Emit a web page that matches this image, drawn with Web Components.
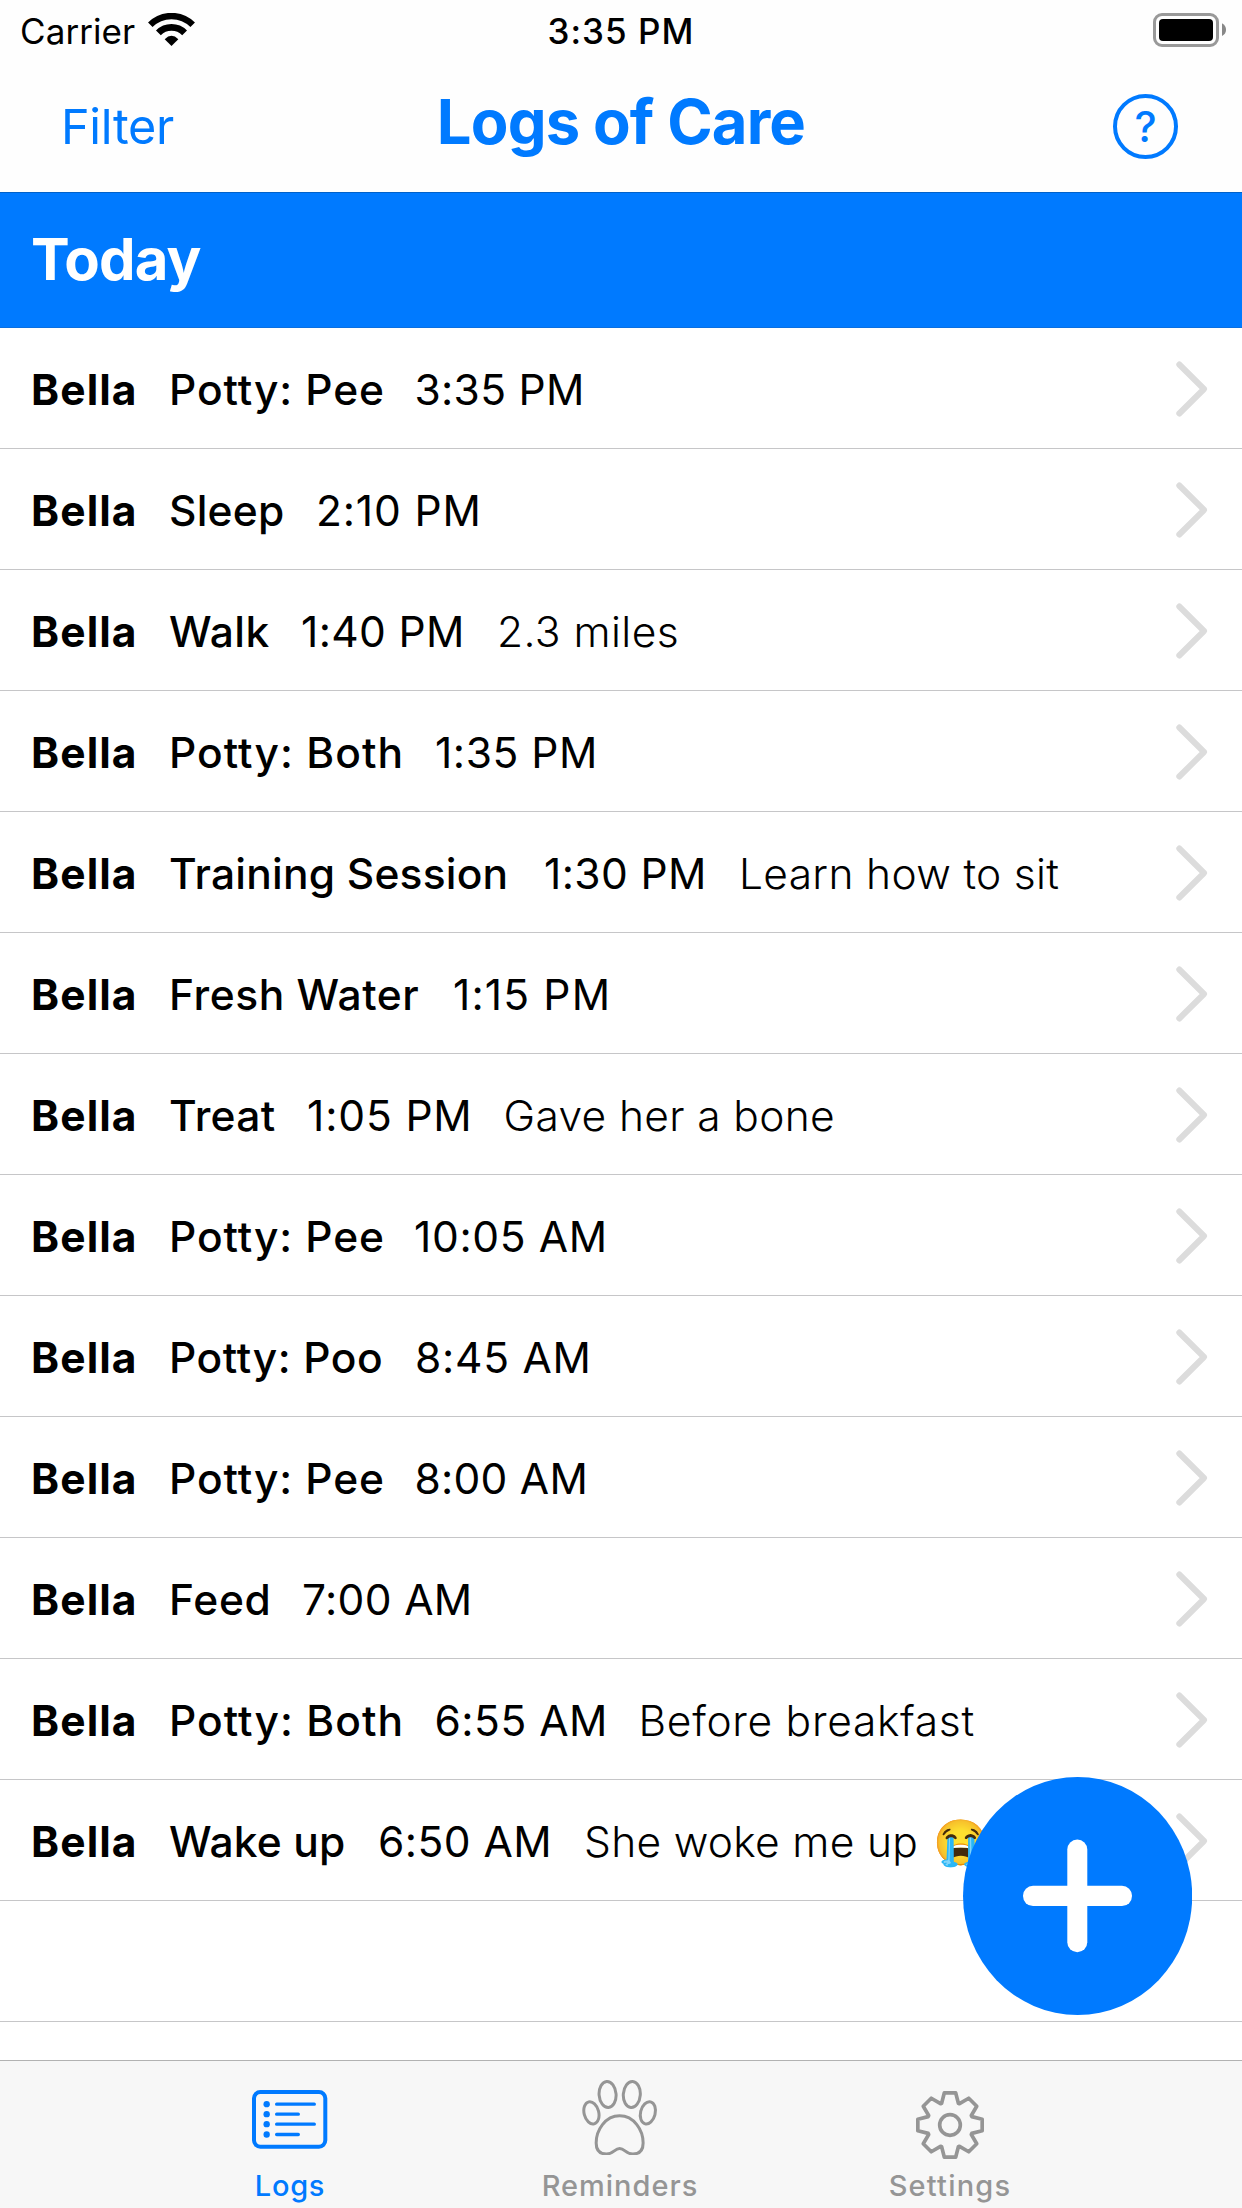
<!DOCTYPE html>
<html lang="en">
<head>
<meta charset="utf-8">
<title>Logs of Care</title>
<style>
html,body{margin:0;padding:0;background:#fff}
body{width:1242px;height:2208px;overflow:hidden;font-family:Inter,"Liberation Sans",sans-serif;color:#000}
</style>
</head>
<body>
<care-app></care-app>

<template id="t-app">
<style>
:host{display:flex;flex-direction:column;position:relative;width:1242px;height:2208px;overflow:hidden;background:#fff}
main{flex:1;min-height:0;overflow:hidden}
add-button{position:absolute;left:963px;top:1777px}
</style>
<status-bar></status-bar>
<nav-bar>Logs of Care</nav-bar>
<main>
<section-header>Today</section-header>
<log-list></log-list>
</main>
<tab-bar>
<tab-item kind="logs" active style="--ls:.7px">Logs</tab-item>
<tab-item kind="paw" style="--ls:1px">Reminders</tab-item>
<tab-item kind="gear" style="--ls:1.2px">Settings</tab-item>
</tab-bar>
<add-button></add-button>
</template>

<template id="t-status">
<style>
:host{display:grid;grid-template-columns:1fr auto 1fr;height:60px;background:#fefefe;font-size:35px;line-height:42px}
.l{display:flex;padding:10px 0 0 20px;letter-spacing:.08px}
.l svg{margin:3px 0 0 13px}
.c{padding-top:10px;font-weight:500;letter-spacing:1px}
.r{display:flex;justify-content:flex-end;padding:13px 16px 0 0}
</style>
<div class="l"><span>Carrier</span><svg width="47" height="34" viewBox="148.5 13 47 34" fill="none" stroke="#000"><path stroke-width="6.4" d="M150.8 24.8A30 30 0 0 1 193.2 24.8"/><path stroke-width="6.8" d="M158.9 32.9A18.5 18.5 0 0 1 185.1 32.9"/><path fill="#000" stroke="none" d="M172 46L165.2 39.3Q172 32.4 178.8 39.3Z"/></svg></div>
<div class="c">3:35 PM</div>
<div class="r"><svg width="73" height="34" viewBox="0 0 73 34"><rect x="1.5" y="1.5" width="63" height="31" rx="7.5" fill="none" stroke="#999" stroke-width="3"/><rect x="6" y="6" width="54" height="22" rx="4" fill="#000"/><path fill="#888" d="M69 10.3Q73 12.5 73 16.7T69 23Z"/></svg></div>
</template>

<template id="t-nav">
<style>
:host{display:grid;grid-template-columns:1fr auto 1fr;height:132px;background:#fefefe;color:#007aff;box-sizing:border-box}
.f{padding:37px 0 0 61px;font-size:48.5px;line-height:60px;letter-spacing:-.3px}
.t{padding-top:25px;font-size:61.5px;font-weight:700;line-height:74px;letter-spacing:-.85px}
.h{display:flex;justify-content:flex-end;padding:34px 64px 0 0}
.q{display:flex;align-items:center;justify-content:center;box-sizing:border-box;width:65px;height:65px;border:4.7px solid #007aff;border-radius:50%;font-size:42px;font-weight:500;line-height:52px}
</style>
<div class="f">Filter</div>
<div class="t"><slot></slot></div>
<div class="h"><div class="q">?</div></div>
</template>

<template id="t-section">
<style>
:host{display:block;box-sizing:border-box;height:136px;padding:31px 0 0 31px;background:#007aff;border-top:1px solid #0061c9;border-bottom:1px solid #0a6fe0;color:#fff;font-size:58px;font-weight:700;line-height:70px;letter-spacing:-.87px}
</style>
<slot></slot>
</template>

<template id="t-row">
<style>
:host{display:flex;box-sizing:border-box;height:121px;padding:0 33px 0 31px;border-bottom:1px solid #c6c6c8;font-size:42.5px;line-height:52px;white-space:pre}
.x{display:flex;flex:1;padding-top:36px}
.x span{flex:none}
b{font-weight:700;letter-spacing:1.1px;width:138px}
.k{font-weight:500}
.n{font-weight:300}
.e{font-size:44.7px;letter-spacing:0;margin-left:15px}
svg{margin-top:32.5px}
</style>
<div class="x"></div>
</template>

<template id="t-tabs">
<style>
:host{display:flex;justify-content:center;height:147px;padding-right:2px;background:#f7f7f7;border-top:1px solid #b2b2b2}
</style>
<slot></slot>
</template>

<template id="t-tab">
<style>
:host{display:flex;flex-direction:column;align-items:center;width:330px;color:#959595}
:host([active]){color:#007aff}
.i{height:107px;display:flex;align-items:flex-start}
.i svg{display:block}
.l{font-size:29px;font-weight:500;line-height:35px;letter-spacing:var(--ls)}
</style>
<div class="i"></div><div class="l"><slot></slot></div>
</template>

<template id="t-add">
<style>:host{display:block;width:229px;height:238px}svg{display:block}</style>
<svg width="229" height="238" viewBox="0 0 229 238"><ellipse cx="114.6" cy="119" rx="114.6" ry="119" fill="#007aff"/><rect x="60" y="108.8" width="109" height="20.3" rx="10" fill="#fff"/><rect x="104.3" y="62.5" width="20" height="112.7" rx="10" fill="#fff"/></svg>
</template>

<script>
class Base extends HTMLElement{
  connectedCallback(){
    if(this.shadowRoot)return;
    this.attachShadow({mode:'open'}).append(document.getElementById(this.constructor.tpl).content.cloneNode(true));
    this.ready&&this.ready();
  }
}
const define=(name,tpl,ready)=>{
  const C=class extends Base{};
  C.tpl=tpl;
  if(ready)C.prototype.ready=ready;
  customElements.define(name,C);
};

const gearPoints=()=>{
  const out=[];
  for(let i=0;i<8;i++)for(const [a,r] of [[-21,70],[-10,98],[10,98],[21,70]]){
    const t=(i*45+a)*Math.PI/180;
    out.push((270+r*Math.sin(t)).toFixed(1)+','+(255-r*Math.cos(t)).toFixed(1));
  }
  return out.join(' ');
};
const ICONS={
  logs:`<svg style="margin-top:29.3px" width="75.3" height="58.7" viewBox="96 151 226 176" fill="none" stroke="currentColor"><rect x="102" y="157" width="214" height="164" rx="19" stroke-width="12"/><g stroke-width="10" stroke-linecap="round"><path d="M170 193.500H283M170 223.500H235M170 253.500H283M170 284.500H235"/></g><g fill="currentColor" stroke="none"><circle cx="140" cy="193.500" r="9.500"/><circle cx="140" cy="223.500" r="9.500"/><circle cx="140" cy="253.500" r="9.500"/><circle cx="140" cy="284.500" r="9.500"/></g></svg>`,
  paw:`<svg style="margin-top:18.700px" width="75.300" height="75.700" viewBox="188.500 119 226 227" fill="none" stroke="currentColor" stroke-width="9"><ellipse cx="265.300" cy="162.500" rx="25.500" ry="39" transform="rotate(-4 265.300 162.500)"/><ellipse cx="338" cy="162.500" rx="25.500" ry="39" transform="rotate(4 338 162.500)"/><ellipse cx="216.800" cy="217.500" rx="22" ry="34" transform="rotate(-14 216.800 217.500)"/><ellipse cx="386.200" cy="217.500" rx="22" ry="34" transform="rotate(14 386.200 217.500)"/><path d="M301.500 226.500C258 226.500 231 270 231 308C231 331 243 341 262 341C284 341 286 324.500 301.500 324.500C317 324.500 319 341 341 341C360 341 372 331 372 308C372 270 345 226.500 301.500 226.500Z"/></svg>`,
  gear:`<svg style="margin-top:30px" width="68" height="68" viewBox="168 153 204 204" fill="none" stroke="currentColor" stroke-width="11" stroke-linejoin="round"><polygon points="${gearPoints()}"/><circle cx="270" cy="255" r="31"/></svg>`
};
const CHEVRON=`<svg width="33" height="56" viewBox="1176 32.500 33 56" fill="none" stroke="#dcdcdc" stroke-width="6" stroke-linecap="round" stroke-linejoin="round"><path d="M1179.300 36L1204 60.500L1179.300 85"/></svg>`;

/* each entry: [kind, tracking, column width], [time, tracking, column width], [note, tracking] */
const LOGS=[
  [['Potty: Pee',.9,245.5],['3:35 PM',.3]],
  [['Sleep',.2,147],['2:10 PM',.85]],
  [['Walk',.4,132],['1:40 PM',.35,196],['2.3 miles',.45]],
  [['Potty: Both',1.05,266],['1:35 PM',.55]],
  [['Training Session',.2,375],['1:30 PM',.4,195],['Learn how to sit',.33]],
  [['Fresh Water',.55,284],['1:15 PM',1.15]],
  [['Treat',.3,138],['1:05 PM',.85,196.5],['Gave her a bone',.35]],
  [['Potty: Pee',.9,245],['10:05 AM',.65]],
  [['Potty: Poo',.6,246],['8:45 AM',.75]],
  [['Potty: Pee',.9,245.5],['8:00 AM',.25]],
  [['Feed',.7,133],['7:00 AM',.35]],
  [['Potty: Both',1.05,265.5],['6:55 AM',.5,204],['Before breakfast',.7]],
  [['Wake up',.14,209],['6:50 AM',.45,206],['She woke me up',.3],'😭'],
  null
];

define('status-bar','t-status');
define('nav-bar','t-nav');
define('section-header','t-section');
define('add-button','t-add');
define('tab-bar','t-tabs');
define('tab-item','t-tab',function(){
  this.shadowRoot.querySelector('.i').innerHTML=ICONS[this.getAttribute('kind')];
});
define('log-row','t-row',function(){
  const d=this.data;
  if(!d)return;
  const x=this.shadowRoot.querySelector('.x');
  const name=document.createElement('b');
  name.textContent='Bella';
  x.append(name);
  d.forEach((c,i)=>{
    const s=document.createElement('span');
    s.className='ktne'[i];
    if(typeof c==='string')s.textContent=c;
    else{
      s.textContent=c[0];
      s.style.letterSpacing=c[1]+'px';
      if(c[2])s.style.width=c[2]+'px';
    }
    x.append(s);
  });
  x.insertAdjacentHTML('afterend',CHEVRON);
});
customElements.define('log-list',class extends HTMLElement{
  connectedCallback(){
    const r=this.attachShadow({mode:'open'});
    r.innerHTML='<style>:host{display:flex;flex-direction:column}</style>';
    for(const d of LOGS){
      const row=document.createElement('log-row');
      row.data=d;
      r.append(row);
    }
  }
});
define('care-app','t-app');
</script>
</body>
</html>
